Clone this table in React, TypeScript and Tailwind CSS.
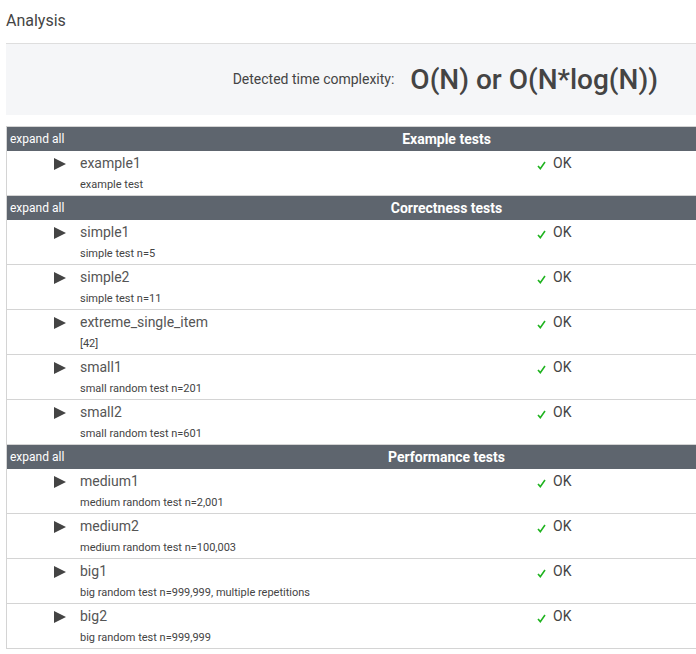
const groups = [
  {
    title: "Example tests",
    tests: [{ name: "example1", desc: "example test" }],
  },
  {
    title: "Correctness tests",
    tests: [
      { name: "simple1", desc: "simple test n=5" },
      { name: "simple2", desc: "simple test n=11" },
      { name: "extreme_single_item", desc: "[42]" },
      { name: "small1", desc: "small random test n=201" },
      { name: "small2", desc: "small random test n=601" },
    ],
  },
  {
    title: "Performance tests",
    tests: [
      { name: "medium1", desc: "medium random test n=2,001" },
      { name: "medium2", desc: "medium random test n=100,003" },
      { name: "big1", desc: "big random test n=999,999, multiple repetitions" },
      { name: "big2", desc: "big random test n=999,999" },
    ],
  },
];

function TestRow({ name, desc }: { name: string; desc: string }) {
  return (
    <div className="flex h-[45px] border-b border-[#d4d4d4]">
      <div className="w-[531px] pl-[47px] pt-[2px]">
        <div className="flex items-center h-[20px]">
          <svg width="12" height="12" viewBox="0 0 12 12" className="mr-[14px] mt-[1px]">
            <path d="M0 0 L12 6 L0 12 Z" fill="#444" />
          </svg>
          <span className="text-[14px] leading-[20px] text-[#555]">{name}</span>
        </div>
        <div className="text-[11px] leading-[16px] text-[#444] mt-[4px] ml-[26px]">{desc}</div>
      </div>
      <div className="pt-[2px]">
        <div className="flex items-center h-[20px]">
          <svg width="9" height="9" viewBox="0 0 9 9" className="mr-[7px] mt-[4px] -ml-[1px]">
            <path d="M1 5 L3.3 7.6 L8 1" fill="none" stroke="#1fb31f" strokeWidth="1.6" />
          </svg>
          <span className="text-[14px] leading-[20px] text-[#444]">OK</span>
        </div>
      </div>
    </div>
  );
}

export default function App() {
  return (
    <div className="w-[696px] h-[654px] bg-white overflow-hidden font-['Roboto',sans-serif]">
      <div className="pl-[6px]">
        <div className="h-[44px] pt-[9px] text-[16px] text-[#444] border-b border-[#dedede]">
          Analysis
        </div>
        <div className="h-[71px] bg-[#f5f6f8] flex items-center justify-end pr-[38px]">
          <span className="text-[14px] text-[#444] mr-[16px]">Detected time complexity:</span>
          <span className="text-[28px] text-[#444] font-medium">O(N) or O(N*log(N))</span>
        </div>
        <div className="mt-[11px] border-l border-t border-[#d4d4d4]">
          {groups.map((g) => (
            <div key={g.title}>
              <div className="flex h-[24px] bg-[#5e656e] text-white items-center">
                <div className="w-[190px] pl-[3px] text-[12px]">expand all</div>
                <div className="flex-1 text-center text-[14px] font-bold">{g.title}</div>
              </div>
              {g.tests.map((t) => (
                <TestRow key={t.name} name={t.name} desc={t.desc} />
              ))}
            </div>
          ))}
        </div>
      </div>
    </div>
  );
}
